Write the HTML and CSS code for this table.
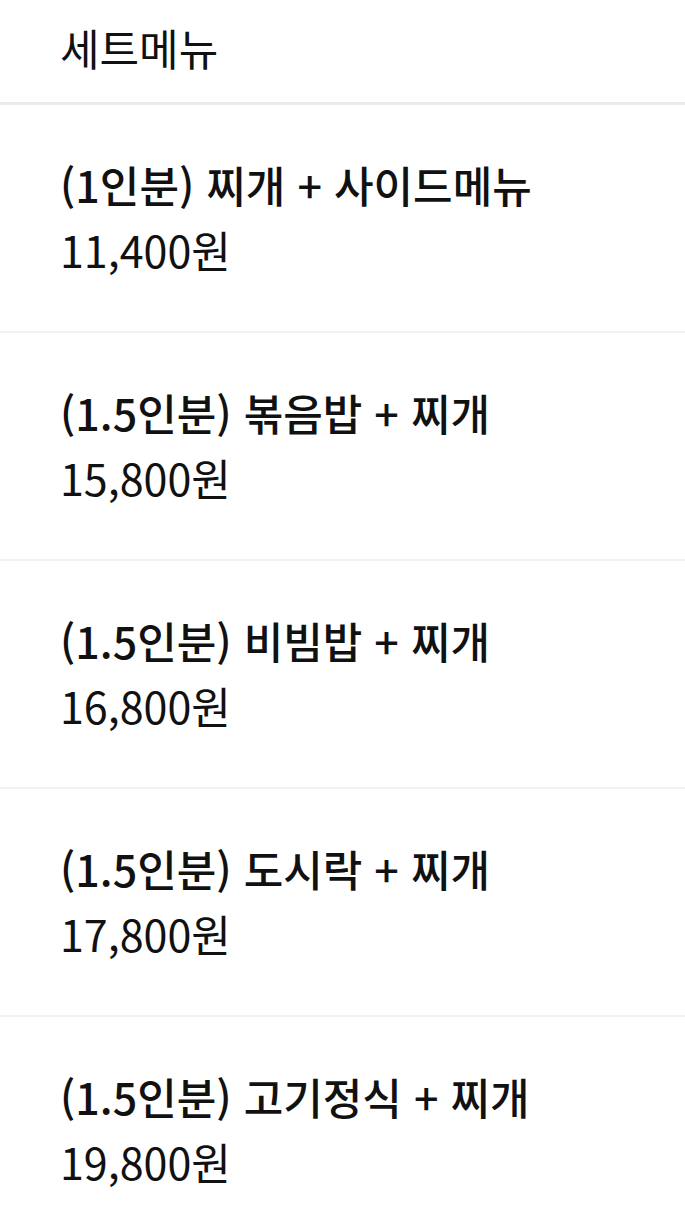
FILE: index.html
```html
<!DOCTYPE html>
<html lang="ko">
<head>
    <meta charset="UTF-8">
    <meta name="viewport" content="width=device-width, initial-scale=1.0">
    <title>세트메뉴</title>
    <link rel="stylesheet" href="styles.css">
</head>
<body>

    <div class="section-title">세트메뉴</div>

    <ul class="menu-list">
        <li class="menu-item">
            <div class="menu-name">(1인분) 찌개 + 사이드메뉴</div>
            <div class="menu-price">11,400원</div>
        </li>
        <li class="menu-item">
            <div class="menu-name">(1.5인분) 볶음밥 + 찌개</div>
            <div class="menu-price">15,800원</div>
        </li>
        <li class="menu-item">
            <div class="menu-name">(1.5인분) 비빔밥 + 찌개</div>
            <div class="menu-price">16,800원</div>
        </li>
        <li class="menu-item">
            <div class="menu-name">(1.5인분) 도시락 + 찌개</div>
            <div class="menu-price">17,800원</div>
        </li>
        <li class="menu-item">
            <div class="menu-name">(1.5인분) 고기정식 + 찌개</div>
            <div class="menu-price">19,800원</div>
        </li>
    </ul>

</body>
</html>
```

FILE: styles.css
```css
body {
    margin: 0;
    font-family: "Noto Sans CJK KR", "Noto Sans", sans-serif;
    background-color: #ffffff;
    color: #111111;
}
.section-title {
    height: 105px;
    box-sizing: border-box;
    padding-left: 60px;
    font-size: 43px;
    line-height: 94px;
    border-bottom: 3px solid #ebebeb;
}
.menu-list {
    list-style: none;
    margin: 0;
    padding: 0;
}
.menu-item {
    padding: 47px 60px 49px;
    border-bottom: 2px solid #f2f2f2;
    font-size: 43px;
    line-height: 65px;
}
.menu-name {
    font-weight: 500;
}
.menu-price {
    font-weight: 400;
}
```
